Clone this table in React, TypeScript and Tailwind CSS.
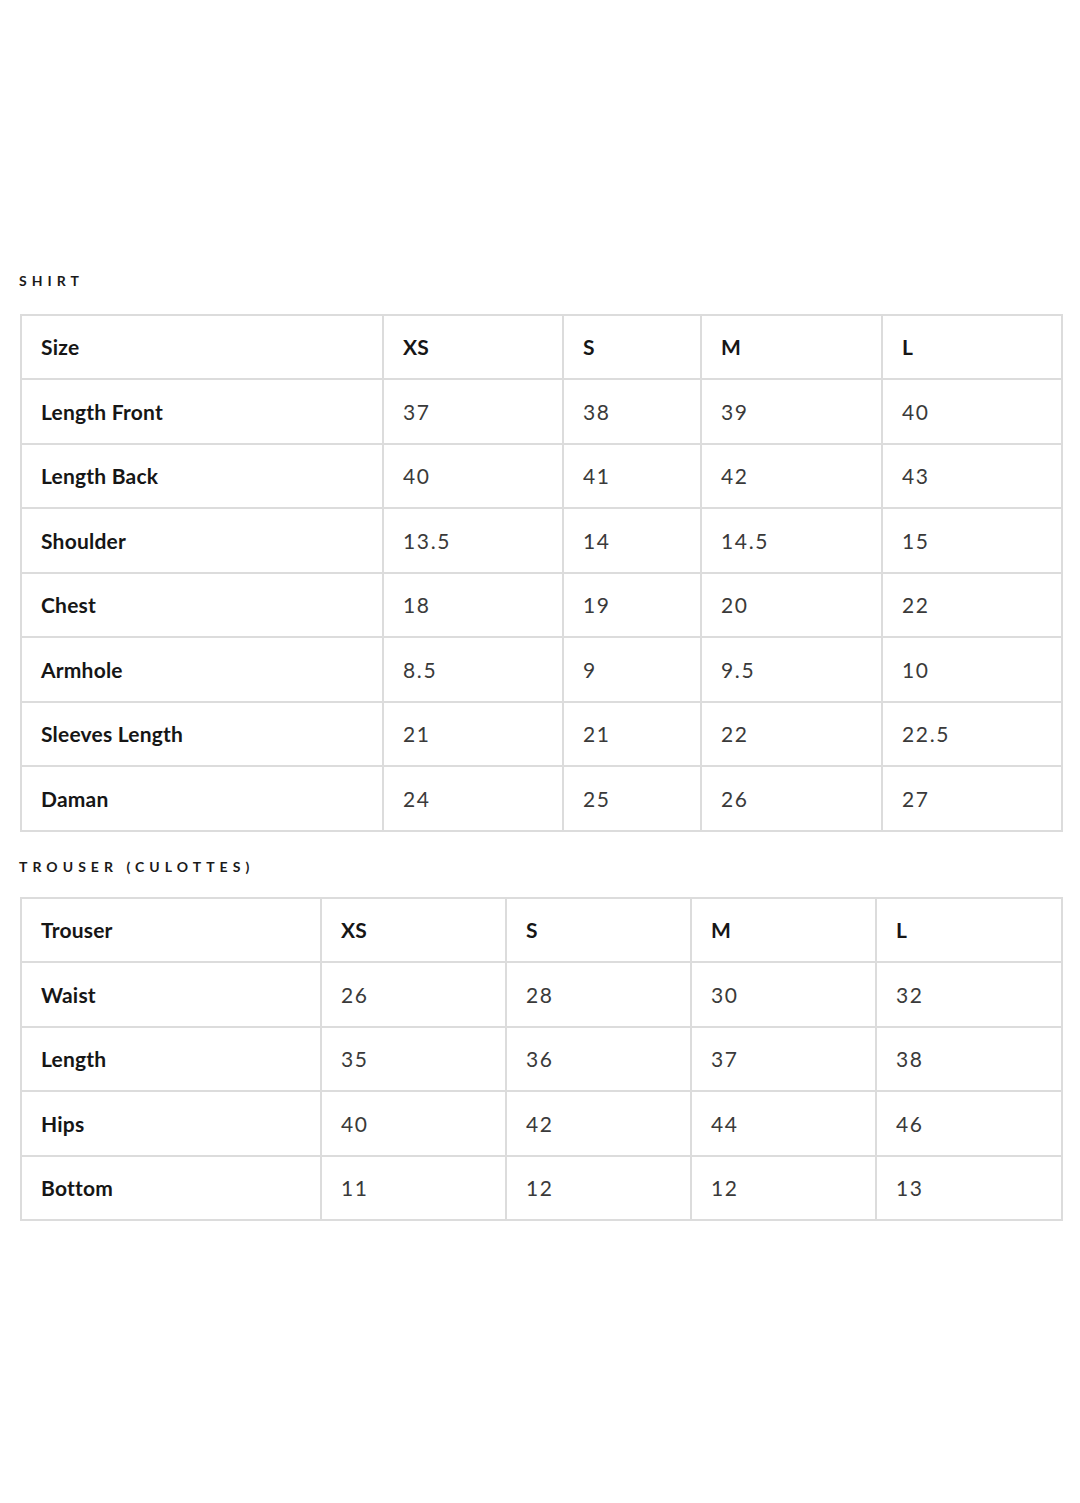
import React from "react";

const shirtCols = [362, 180, 138, 181, 180];
const trouserCols = [300, 185, 185, 185, 186];

const shirtRows: string[][] = [
  ["Size", "XS", "S", "M", "L"],
  ["Length Front", "37", "38", "39", "40"],
  ["Length Back", "40", "41", "42", "43"],
  ["Shoulder", "13.5", "14", "14.5", "15"],
  ["Chest", "18", "19", "20", "22"],
  ["Armhole", "8.5", "9", "9.5", "10"],
  ["Sleeves Length", "21", "21", "22", "22.5"],
  ["Daman", "24", "25", "26", "27"],
];

const trouserRows: string[][] = [
  ["Trouser", "XS", "S", "M", "L"],
  ["Waist", "26", "28", "30", "32"],
  ["Length", "35", "36", "37", "38"],
  ["Hips", "40", "42", "44", "46"],
  ["Bottom", "11", "12", "12", "13"],
];

function SizeTable({ cols, rows, rowClass }: { cols: number[]; rows: string[][]; rowClass: string }) {
  return (
    <table className="table-fixed border-collapse w-[1041px]">
      <colgroup>
        {cols.map((w, i) => (
          <col key={i} style={{ width: w }} />
        ))}
      </colgroup>
      <tbody>
        {rows.map((r, ri) => (
          <tr key={ri} className={rowClass}>
            {r.map((c, ci) => {
              const bold = ri === 0 || ci === 0;
              return (
                <td
                  key={ci}
                  className={
                    "border-2 border-[#dcdcdc] pl-[19px] align-middle text-[21px] " +
                    (bold
                      ? "font-bold text-[#161616] tracking-[0.01em]"
                      : "font-normal text-[#3a3a3a] tracking-[0.08em]")
                  }
                >
                  {c}
                </td>
              );
            })}
          </tr>
        ))}
      </tbody>
    </table>
  );
}

export default function App() {
  return (
    <div className="w-[1080px] h-[1503px] bg-white pl-[20px] pt-[272px]" style={{ fontFamily: "Lato, 'Noto Sans', sans-serif" }}>
      <div className="text-[14px] font-bold tracking-[0.36em] text-[#1a1a1a] leading-[18px] -ml-[1px]">SHIRT</div>
      <div className="mt-[24px]">
        <SizeTable cols={shirtCols} rows={shirtRows} rowClass="h-[64.45px]" />
      </div>
      <div className="mt-[26px] text-[14px] font-bold tracking-[0.36em] text-[#1a1a1a] leading-[18px] -ml-[1px]">TROUSER (CULOTTES)</div>
      <div className="mt-[21px]">
        <SizeTable cols={trouserCols} rows={trouserRows} rowClass="h-[64.6px]" />
      </div>
    </div>
  );
}
